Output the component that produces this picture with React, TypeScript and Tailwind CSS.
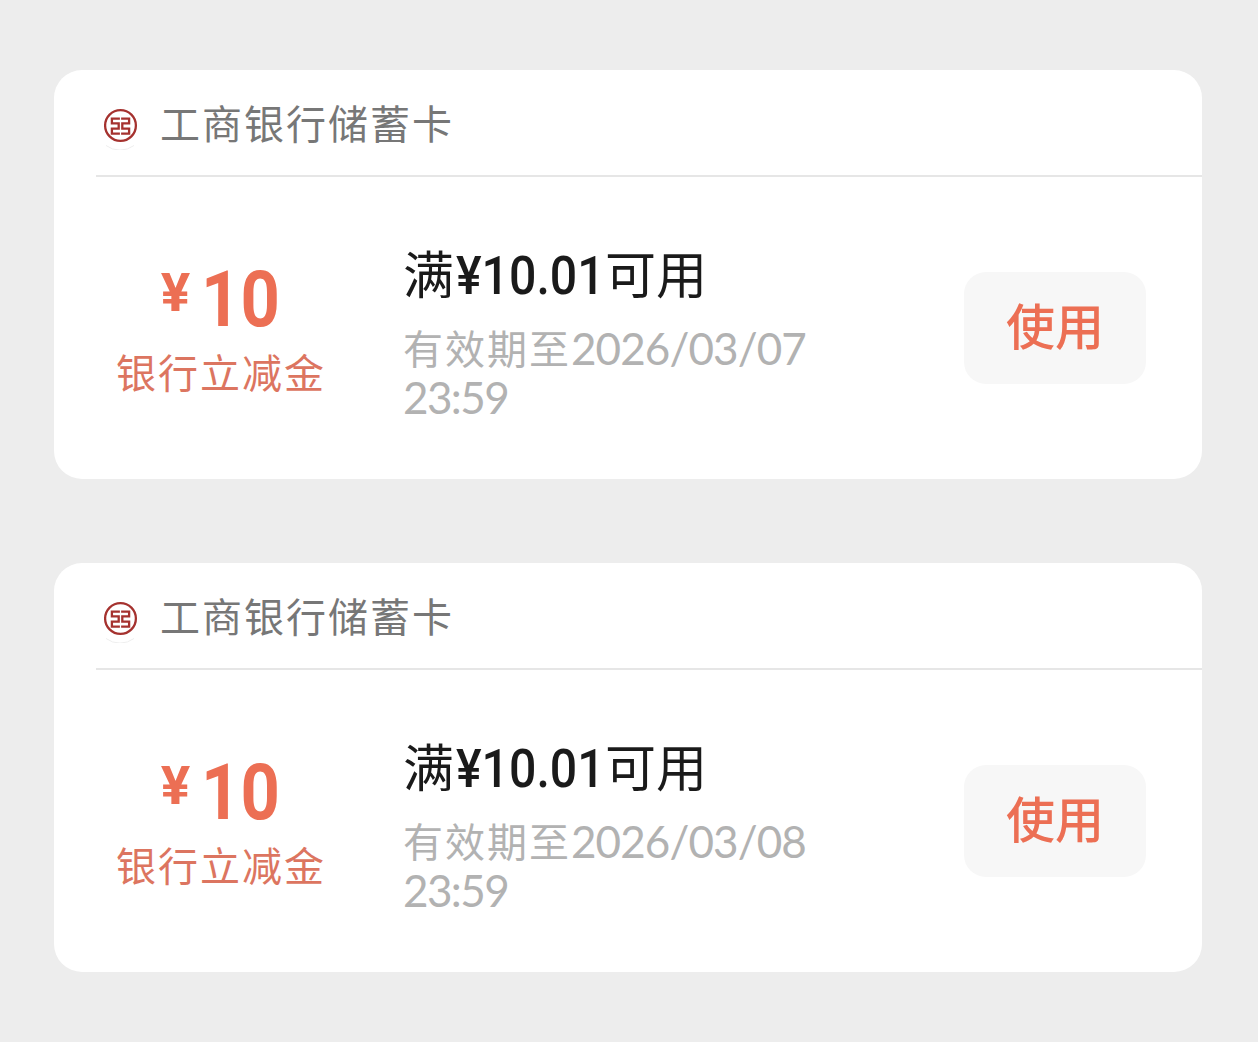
import React from 'react';

const coupons = [
  { bank: '工商银行储蓄卡', amount: '10', type: '银行立减金', threshold: '10.01', date: '2026/03/07', time: '23:59' },
  { bank: '工商银行储蓄卡', amount: '10', type: '银行立减金', threshold: '10.01', date: '2026/03/08', time: '23:59' },
];

const BankLogo = () => (
  <svg className="w-12 h-12" viewBox="0 0 48 48" fill="none">
    <path d="M10 43.5A23.5 23.5 0 0 0 38 43.5" stroke="#eeeeee" strokeWidth="1" />
    <circle cx="24.5" cy="23.5" r="15.4" stroke="#a5322f" strokeWidth="2.3" />
    <g stroke="#a5322f" strokeWidth="2.3">
      <path d="M23.9 16.7H15.9V21.4H22.7V26.6H15.9V31.6H23.9" />
      <path d="M25.1 16.7H33.1V21.4H26.3V26.6H33.1V31.6H25.1" />
    </g>
  </svg>
);

const CouponCard = ({ coupon }: { coupon: (typeof coupons)[number] }) => (
  <section className="h-[409px] overflow-hidden rounded-[28px] bg-white">
    <header className="ml-[42px] flex h-[107px] items-start border-b-2 border-[#e6e6e6]">
      <div className="mt-[32px] shrink-0">
        <BankLogo />
      </div>
      <h2 className="ml-[16px] mt-[22px] text-[40px] leading-[60px] tracking-[2px] text-[#777777]">{coupon.bank}</h2>
    </header>

    <div className="flex h-[302px]">
      <div className="w-[334px] pt-[79px] text-center text-[#ec6f54]">
        <div className="flex h-[85px] items-start justify-center pl-[9px] font-['Roboto'] font-bold">
          <span className="mr-[11px] mt-[5px] origin-center scale-x-[1.02] text-[54px] leading-[64px]">¥</span>
          <span className="origin-left scale-x-[.88] text-[78px] leading-[88px]">{coupon.amount}</span>
        </div>
        <div className="text-[40px] leading-[60px] tracking-[2px] text-[#dc7560]">{coupon.type}</div>
      </div>

      <div className="w-[576px] pl-[15px] pt-[57px]">
        <h3 className="flex h-[76px] items-start text-[51px] leading-[76px] text-[#1a1a1a]">
          <span>满</span>
          <span className="mt-[4px] w-[151px] origin-left translate-x-[2px] scale-x-[.91] font-['Roboto'] text-[53px] font-medium">
            ¥{coupon.threshold}
          </span>
          <span>可用</span>
        </h3>
        <div className="mt-[13px] text-[40px] leading-[49px] text-[#b2b2b2]">
          <div className="flex h-[50px] items-start">
            <span className="tracking-[2px]">有效期至</span>
            <span className="mt-px font-['Lato'] text-[44px] tracking-[-0.9px]">{coupon.date}</span>
          </div>
          <div className="font-['Lato'] text-[44px] tracking-[-1.6px]">{coupon.time}</div>
        </div>
      </div>

      <button className="mt-[95px] h-[112px] w-[182px] rounded-[22px] bg-[#f7f7f7] pb-[8px] text-[49px] font-medium leading-[72px] text-[#ec6f54]">
        使用
      </button>
    </div>
  </section>
);

export default function App() {
  return (
    <main className="flex h-[1042px] w-[1258px] flex-col gap-[84px] bg-[#ededed] pl-[54px] pr-[56px] pt-[70px] font-['Noto_Sans_CJK_SC',sans-serif]">
      {coupons.map((coupon) => (
        <CouponCard key={coupon.date} coupon={coupon} />
      ))}
    </main>
  );
}
